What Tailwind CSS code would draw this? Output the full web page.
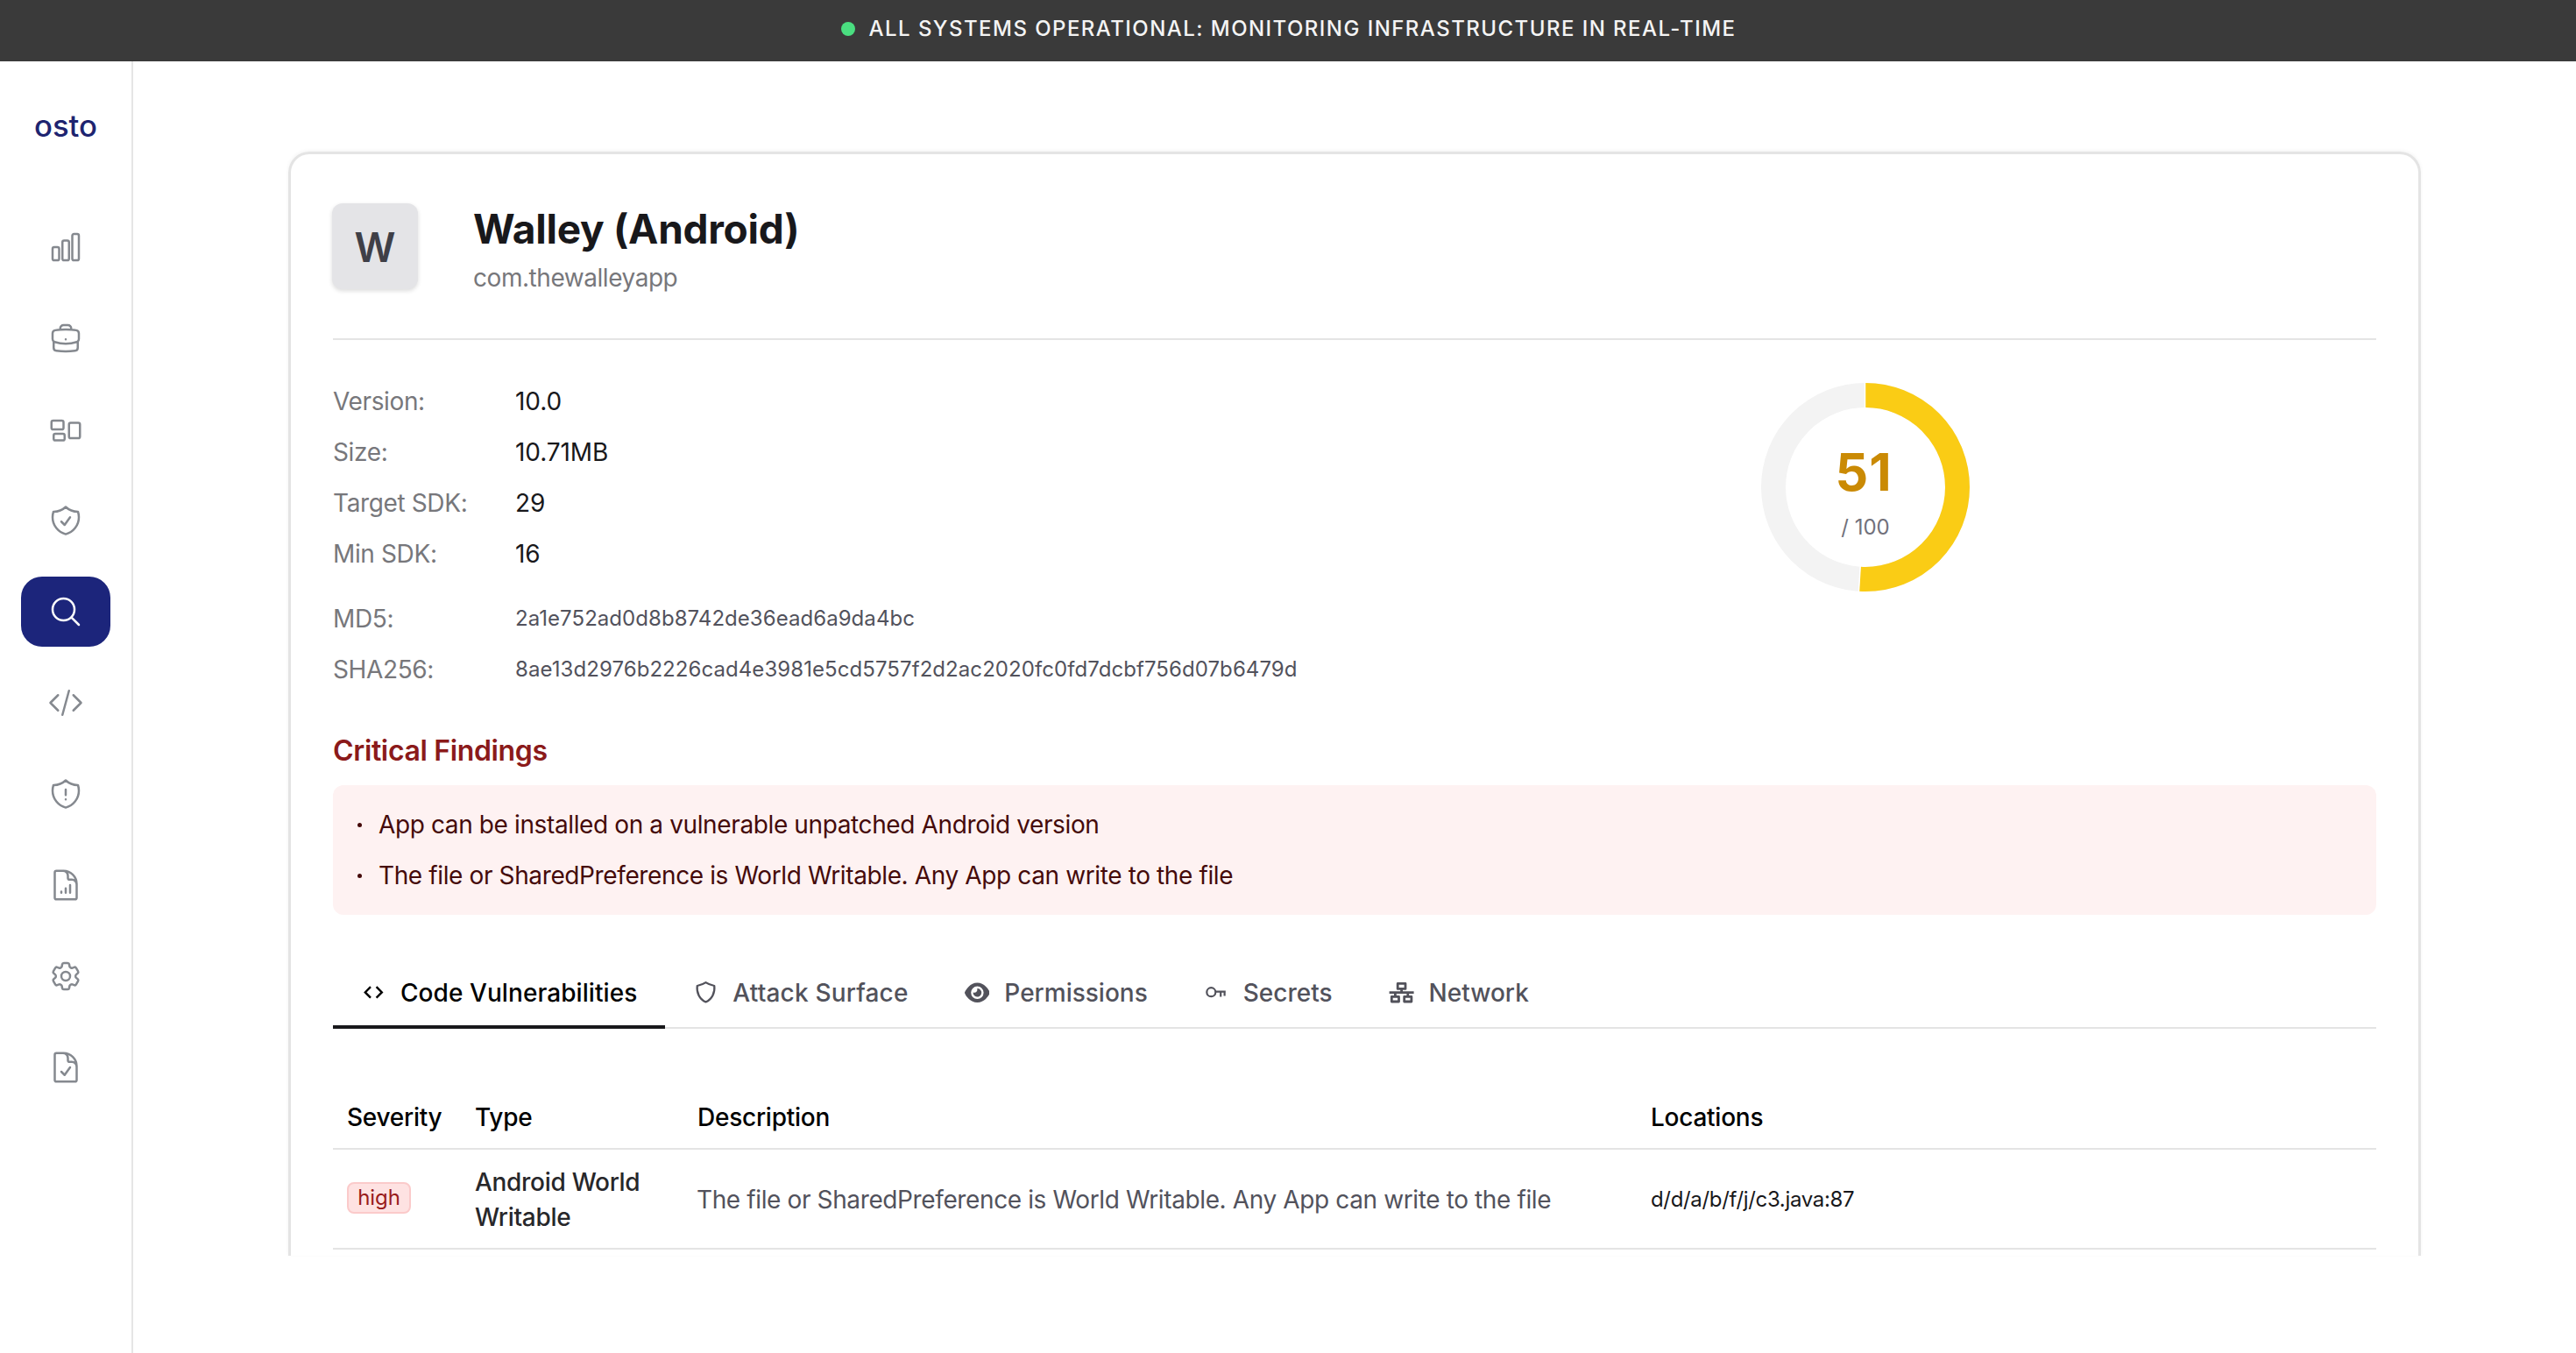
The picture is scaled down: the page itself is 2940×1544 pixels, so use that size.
<!DOCTYPE html>
<html lang="en">
<head>
<meta charset="utf-8">
<title>osto – Walley (Android)</title>
<script src="https://cdn.jsdelivr.net/npm/@tailwindcss/browser@4"></script>
</head>
<body class="flex h-[1544px] w-[2940px] flex-col overflow-hidden bg-white font-['Inter',sans-serif] text-[28px] text-zinc-900">

<!-- Status bar -->
<header class="flex h-[70px] shrink-0 items-center justify-center gap-4 bg-[#3a3a3a] pb-[5px] pl-[1px]">
  <span class="size-4 rounded-full bg-[#4ade80]"></span>
  <span class="pt-px text-2xl font-medium tracking-[1.45px] text-[#f4f4f4]">ALL SYSTEMS OPERATIONAL: MONITORING INFRASTRUCTURE IN REAL-TIME</span>
</header>

<div class="flex min-h-0 flex-1">
  <!-- Sidebar -->
  <aside class="flex w-[152px] shrink-0 flex-col items-center border-r-2 border-[#e5e5e5]">
    <svg class="mt-[52px] h-11 w-[84px] overflow-visible" viewBox="0 0 84 44"><text x="6" y="33.5" textLength="72" lengthAdjust="spacingAndGlyphs" font-family="Inter, sans-serif" font-weight="500" font-size="34" fill="#1e2470">osto</text></svg>
    <nav class="mt-[75.5px] flex flex-col gap-6 text-[#85898f]">
      <a class="flex h-20 w-[102px] items-center justify-center"><svg class="size-10" viewBox="0 0 24 24" fill="none" stroke="currentColor" stroke-width="1.5" stroke-linecap="round" stroke-linejoin="round"><path d="M3 13.125C3 12.504 3.504 12 4.125 12h2.25c.621 0 1.125.504 1.125 1.125v6.75C7.5 20.496 6.996 21 6.375 21h-2.25A1.125 1.125 0 0 1 3 19.875v-6.75ZM9.75 8.625c0-.621.504-1.125 1.125-1.125h2.25c.621 0 1.125.504 1.125 1.125v11.25c0 .621-.504 1.125-1.125 1.125h-2.25a1.125 1.125 0 0 1-1.125-1.125V8.625ZM16.5 4.125c0-.621.504-1.125 1.125-1.125h2.25C20.496 3 21 3.504 21 4.125v15.75c0 .621-.504 1.125-1.125 1.125h-2.25a1.125 1.125 0 0 1-1.125-1.125V4.125Z"/></svg></a>
      <a class="flex h-20 w-[102px] items-center justify-center"><svg class="size-10" viewBox="0 0 24 24" fill="none" stroke="currentColor" stroke-width="1.5" stroke-linecap="round" stroke-linejoin="round"><path d="M20.25 14.15v4.25c0 1.094-.787 2.036-1.872 2.18-2.087.277-4.216.42-6.378.42s-4.291-.143-6.378-.42c-1.085-.144-1.872-1.086-1.872-2.18v-4.25m16.5 0a2.18 2.18 0 0 0 .75-1.661V8.706c0-1.081-.768-2.015-1.837-2.175a48.114 48.114 0 0 0-3.413-.387m4.5 8.006c-.194.165-.42.295-.673.38A23.978 23.978 0 0 1 12 15.75c-2.648 0-5.195-.429-7.577-1.22a2.016 2.016 0 0 1-.673-.38m0 0A2.18 2.18 0 0 1 3 12.489V8.706c0-1.081.768-2.015 1.837-2.175a48.111 48.111 0 0 1 3.413-.387m7.5 0V5.25A2.25 2.25 0 0 0 13.5 3h-3a2.25 2.25 0 0 0-2.25 2.25v.894m7.5 0a48.667 48.667 0 0 0-7.5 0M12 12.75h.008v.008H12v-.008Z"/></svg></a>
      <a class="flex h-20 w-[102px] items-center justify-center"><svg class="size-10" viewBox="0 0 24 24" fill="none" stroke="currentColor" stroke-width="1.5" stroke-linecap="round" stroke-linejoin="round"><path d="M2.25 7.125C2.25 6.504 2.754 6 3.375 6h6c.621 0 1.125.504 1.125 1.125v3.75c0 .621-.504 1.125-1.125 1.125h-6a1.125 1.125 0 0 1-1.125-1.125v-3.75ZM14.25 8.625c0-.621.504-1.125 1.125-1.125h5.25c.621 0 1.125.504 1.125 1.125v8.25c0 .621-.504 1.125-1.125 1.125h-5.25a1.125 1.125 0 0 1-1.125-1.125v-8.25ZM3.75 16.125c0-.621.504-1.125 1.125-1.125h5.25c.621 0 1.125.504 1.125 1.125v2.25c0 .621-.504 1.125-1.125 1.125h-5.25a1.125 1.125 0 0 1-1.125-1.125v-2.25Z"/></svg></a>
      <a class="flex h-20 w-[102px] items-center justify-center"><svg class="size-10" viewBox="0 0 24 24" fill="none" stroke="currentColor" stroke-width="1.5" stroke-linecap="round" stroke-linejoin="round"><path d="M9 12.75 11.25 15 15 9.75m-3-7.036A11.959 11.959 0 0 1 3.598 6 11.99 11.99 0 0 0 3 9.749c0 5.592 3.824 10.29 9 11.623 5.176-1.332 9-6.03 9-11.622 0-1.31-.21-2.571-.598-3.751h-.152c-3.196 0-6.1-1.248-8.25-3.285Z"/></svg></a>
      <a class="flex h-20 w-[102px] items-center justify-center rounded-3xl bg-[#1c257b] text-white"><svg class="size-10" viewBox="0 0 24 24" fill="none" stroke="currentColor" stroke-width="1.5" stroke-linecap="round" stroke-linejoin="round"><path d="m21 21-5.197-5.197m0 0A7.5 7.5 0 1 0 5.196 5.196a7.5 7.5 0 0 0 10.607 10.607Z"/></svg></a>
      <a class="flex h-20 w-[102px] items-center justify-center"><svg class="size-10" viewBox="0 0 24 24" fill="none" stroke="currentColor" stroke-width="1.5" stroke-linecap="round" stroke-linejoin="round"><path d="M17.25 6.75 22.5 12l-5.25 5.25m-10.5 0L1.5 12l5.25-5.25m7.5-3-4.5 16.5"/></svg></a>
      <a class="flex h-20 w-[102px] items-center justify-center"><svg class="size-10" viewBox="0 0 24 24" fill="none" stroke="currentColor" stroke-width="1.5" stroke-linecap="round" stroke-linejoin="round"><path d="M12 9v3.75m0-10.036A11.959 11.959 0 0 1 3.598 6 11.99 11.99 0 0 0 3 9.749c0 5.592 3.824 10.29 9 11.623 5.176-1.332 9-6.03 9-11.622 0-1.31-.21-2.571-.598-3.751h-.152c-3.196 0-6.1-1.248-8.25-3.285ZM12 15.75h.007v.008H12v-.008Z"/></svg></a>
      <a class="flex h-20 w-[102px] items-center justify-center"><svg class="size-10" viewBox="0 0 24 24" fill="none" stroke="currentColor" stroke-width="1.5" stroke-linecap="round" stroke-linejoin="round"><path d="M19.5 14.25v-2.625a3.375 3.375 0 0 0-3.375-3.375h-1.5A1.125 1.125 0 0 1 13.5 7.125v-1.5a3.375 3.375 0 0 0-3.375-3.375H8.25M9 16.5v.75m3-3v3M15 12v5.25m-4.5-15H5.625c-.621 0-1.125.504-1.125 1.125v17.25c0 .621.504 1.125 1.125 1.125h12.75c.621 0 1.125-.504 1.125-1.125V11.25a9 9 0 0 0-9-9Z"/></svg></a>
      <a class="flex h-20 w-[102px] items-center justify-center"><svg class="size-10" viewBox="0 0 24 24" fill="none" stroke="currentColor" stroke-width="1.5" stroke-linecap="round" stroke-linejoin="round"><path d="M9.594 3.94c.09-.542.56-.94 1.11-.94h2.593c.55 0 1.02.398 1.11.94l.213 1.281c.063.374.313.686.645.87.074.04.147.083.22.127.325.196.72.257 1.075.124l1.217-.456a1.125 1.125 0 0 1 1.37.49l1.296 2.247a1.125 1.125 0 0 1-.26 1.431l-1.003.827c-.293.241-.438.613-.43.992a7.723 7.723 0 0 1 0 .255c-.008.378.137.75.43.991l1.004.827c.424.35.534.955.26 1.43l-1.298 2.247a1.125 1.125 0 0 1-1.369.491l-1.217-.456c-.355-.133-.75-.072-1.076.124a6.47 6.47 0 0 1-.22.128c-.331.183-.581.495-.644.869l-.213 1.281c-.09.543-.56.94-1.11.94h-2.594c-.55 0-1.019-.398-1.11-.94l-.213-1.281c-.062-.374-.312-.686-.644-.87a6.52 6.52 0 0 1-.22-.127c-.325-.196-.72-.257-1.076-.124l-1.217.456a1.125 1.125 0 0 1-1.369-.49l-1.297-2.247a1.125 1.125 0 0 1 .26-1.431l1.004-.827c.292-.24.437-.613.43-.991a6.932 6.932 0 0 1 0-.255c.007-.38-.138-.751-.43-.992l-1.004-.827a1.125 1.125 0 0 1-.26-1.43l1.297-2.247a1.125 1.125 0 0 1 1.37-.491l1.216.456c.356.133.751.072 1.076-.124.072-.044.146-.086.22-.128.332-.183.582-.495.644-.869l.214-1.28Z"/><path d="M15 12a3 3 0 1 1-6 0 3 3 0 0 1 6 0Z"/></svg></a>
      <a class="flex h-20 w-[102px] items-center justify-center"><svg class="size-10" viewBox="0 0 24 24" fill="none" stroke="currentColor" stroke-width="1.5" stroke-linecap="round" stroke-linejoin="round"><path d="M10.125 2.25h-4.5c-.621 0-1.125.504-1.125 1.125v17.25c0 .621.504 1.125 1.125 1.125h12.75c.621 0 1.125-.504 1.125-1.125v-9M10.125 2.25h.375a9 9 0 0 1 9 9v.375M10.125 2.25A3.375 3.375 0 0 1 13.5 5.625v1.5c0 .621.504 1.125 1.125 1.125h1.5a3.375 3.375 0 0 1 3.375 3.375M9 15l2.25 2.25L15 12"/></svg></a>
    </nav>
  </aside>

  <main class="flex-1 pt-[103px] pl-[177px]">
    <section class="h-[1260px] w-[2434px] rounded-t-3xl border-3 border-b-0 border-[#e4e4e4] px-12 pt-14 shadow-[0_-1px_4px_rgba(0,0,0,0.05)]">

      <!-- App heading -->
      <div class="flex h-[156px] items-start gap-16 border-b-2 border-[#e4e4e4]">
        <div class="-ml-px flex size-[98px] items-center justify-center rounded-xl bg-[#e4e4e7] pt-0.5 text-[46px] font-semibold text-zinc-700 shadow-[0_2px_5px_rgba(0,0,0,0.14)]">W</div>
        <div class="-ml-px">
          <h1 class="text-[46px] leading-[58px] font-bold tracking-[-0.27px]">Walley (Android)</h1>
          <p class="pt-px leading-[52px] tracking-[-0.45px] text-[#77777b]">com.thewalleyapp</p>
        </div>
      </div>

      <!-- Metadata and score -->
      <div class="grid grid-cols-2">
        <dl class="grid grid-cols-[208px_1fr] pt-[41px] leading-[58px] tracking-[-0.37px]">
          <dt class="text-[#77777b]">Version:</dt><dd class="tracking-[-0.1px]">10.0</dd>
          <dt class="text-[#77777b]">Size:</dt><dd class="tracking-[-0.1px]">10.71MB</dd>
          <dt class="text-[#77777b]">Target SDK:</dt><dd class="tracking-[-0.1px]">29</dd>
          <dt class="text-[#77777b]">Min SDK:</dt><dd class="tracking-[-0.1px]">16</dd>
          <dt class="mt-4 text-[#77777b]">MD5:</dt><dd class="mt-4 text-2xl leading-[58px] tracking-[0.05px] text-zinc-600">2a1e752ad0d8b8742de36ead6a9da4bc</dd>
          <dt class="text-[#77777b]">SHA256:</dt><dd class="text-2xl leading-[58px] tracking-[0.07px] text-zinc-600">8ae13d2976b2226cad4e3981e5cd5757f2d2ac2020fc0fd7dcbf756d07b6479d</dd>
        </dl>
        <div class="flex justify-center pt-12">
          <div class="relative size-60">
            <svg class="size-60" viewBox="0 0 240 240" fill="none">
              <circle cx="120" cy="120" r="105" stroke="#f3f3f3" stroke-width="28"/>
              <circle cx="120" cy="120" r="105" stroke="#facc15" stroke-width="28" pathLength="100" stroke-dasharray="51 49" transform="rotate(-90 120 120)"/>
              <path d="M119.5 30V0M114.2 210 112.4 240" stroke="#fff" stroke-width="1.5"/>
            </svg>
            <div class="absolute inset-0 flex flex-col items-center pt-[67px]">
              <span class="-ml-1 text-[59px] leading-[72px] font-bold tracking-[1px] text-[#ca8a04]">51</span>
              <span class="text-2xl leading-[54px] text-zinc-500">/ 100</span>
            </div>
          </div>
        </div>
      </div>

      <!-- Critical findings -->
      <h2 class="mt-10 mb-[15px] text-[32px] leading-[48px] font-semibold tracking-[-0.35px] text-[#8b1a1a]">Critical Findings</h2>
      <ul class="rounded-xl bg-[#fef2f2] px-7 py-4 leading-[58px] tracking-[-0.38px] text-[#450a0a]">
        <li class="flex items-center gap-[19px]"><span class="size-[5px] rounded-full bg-[#450a0a]"></span>App can be installed on a vulnerable unpatched Android version</li>
        <li class="flex items-center gap-[19px]"><span class="size-[5px] rounded-full bg-[#450a0a]"></span>The file or SharedPreference is World Writable. Any App can write to the file</li>
      </ul>

      <!-- Tabs -->
      <div class="mt-12 flex h-[82px] border-b-2 border-[#e4e4e4] font-medium text-[#52525b]">
        <div class="-mb-[2px] flex items-center gap-[17px] border-b-4 border-zinc-900 px-8 pt-1 text-black">
          <svg class="size-7" viewBox="0 0 28 28" fill="none" stroke="currentColor" stroke-width="2.4"><path d="M11 7.2 4.8 13.4 11 19.6M17.6 7.2 23.8 13.4 17.6 19.6"/></svg>
          <span class="tracking-[0.07px]">Code Vulnerabilities</span>
        </div>
        <div class="-mb-[2px] flex items-center gap-[17px] px-8">
          <svg class="size-7" viewBox="0 0 28 28" fill="none" stroke="currentColor" stroke-width="2.2" stroke-linejoin="round"><path d="M14.5 2.2C17 4 20.5 5.2 24.3 6C25.2 14 21.5 21.5 14.5 24.5C7.5 21.5 3.8 14 4.7 6C8.5 5.2 12 4 14.5 2.2Z"/></svg>
          <span class="tracking-[0.18px]">Attack Surface</span>
        </div>
        <div class="-mb-[2px] flex items-center gap-[17px] px-8">
          <svg class="h-[25.6px] w-[28.8px]" viewBox="0 0 576 512" fill="currentColor"><path d="M288 32c-80.8 0-145.5 36.8-192.6 80.6C48.6 156 17.3 208 2.5 243.7c-3.3 7.9-3.3 16.7 0 24.6C17.3 304 48.6 356 95.4 399.4C142.5 443.2 207.2 480 288 480s145.5-36.8 192.6-80.6c46.8-43.5 78.1-95.4 93-131.1c3.3-7.9 3.3-16.7 0-24.6c-14.9-35.7-46.2-87.7-93-131.1C433.5 68.8 368.8 32 288 32zM144 256a144 144 0 1 1 288 0 144 144 0 1 1 -288 0zm144-64c0 35.3-28.7 64-64 64c-7.1 0-13.9-1.2-20.3-3.3c-5.5-1.8-11.9 1.6-11.7 7.4c.3 6.9 1.3 13.8 3.2 20.7c13.7 51.2 66.4 81.6 117.6 67.9s81.6-66.4 67.9-117.6c-11.1-41.5-47.8-69.4-88.6-71.1c-5.8-.2-9.2 6.1-7.4 11.7c2.1 6.4 3.3 13.2 3.3 20.3z"/></svg>
          <span>Permissions</span>
        </div>
        <div class="-mb-[2px] flex items-center gap-[17px] px-8">
          <svg class="size-7" viewBox="0 0 28 28" fill="none" stroke="currentColor" stroke-width="2.2"><circle cx="8.3" cy="13.2" r="5"/><path d="M13.3 12.6H24.8M19.2 12.6V18.4M23.6 12.6V17.6"/></svg>
          <span>Secrets</span>
        </div>
        <div class="-mb-[2px] flex items-center gap-[18px] px-8">
          <svg class="size-7 overflow-visible" viewBox="0 0 28 28" fill="none" stroke="currentColor" stroke-width="2.8" stroke-linejoin="round"><path d="M10.2 3.4H19V9.4H10.2ZM3.3 18.4H11.5V24H3.3ZM17.7 18.4H25.9V24H17.7ZM.6 13.6H28.6"/><path d="M14.6 9.4V13.6M7.4 13.6V18.4M21.8 13.6V18.4"/></svg>
          <span>Network</span>
        </div>
      </div>

      <!-- Vulnerability table -->
      <div class="mt-16 grid h-[74px] grid-cols-[146px_254px_1088px_1fr] items-center border-b-2 border-[#e4e4e4] pt-0.5 font-medium tracking-[-0.25px] text-black">
        <div class="px-4">Severity</div><div class="px-4">Type</div><div class="px-4">Description</div><div class="px-4">Locations</div>
      </div>
      <div class="grid h-[114px] grid-cols-[146px_254px_1088px_1fr] items-center border-b-2 border-[#e4e4e4] pt-0.5">
        <div class="px-4 pb-1"><span class="flex h-9 w-[73px] items-center justify-center rounded-lg border-2 border-[#fbcaca] bg-[#fee2e2] text-2xl tracking-[-0.1px] text-[#991b1b]">high</span></div>
        <div class="px-4 leading-10 font-medium tracking-[-0.3px] text-zinc-800">Android World<br>Writable</div>
        <div class="px-[15px] tracking-[-0.38px] text-zinc-600">The file or SharedPreference is World Writable. Any App can write to the file</div>
        <div class="px-4 text-2xl tracking-[-0.33px]">d/d/a/b/f/j/c3.java:87</div>
      </div>
    </section>
  </main>
</div>
</body>
</html>
